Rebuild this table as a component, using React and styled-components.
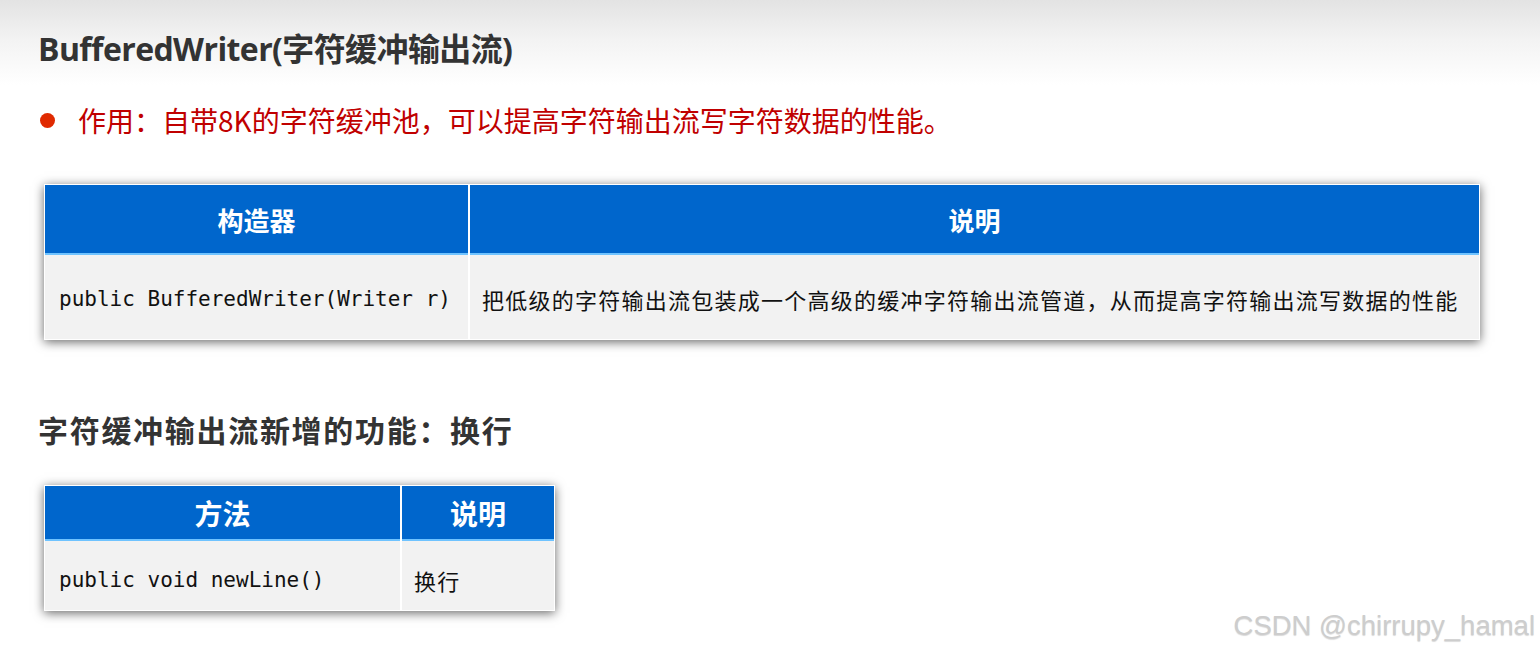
import React from "react";
import styled, { createGlobalStyle } from "styled-components";

const GlobalStyle = createGlobalStyle`
  html, body {
    margin: 0;
    padding: 0;
  }
  body {
    background: #ffffff;
    font-family: "Noto Sans", "Noto Sans CJK SC", sans-serif;
  }
`;

const ctorTable = {
  columns: "423px 1fr",
  width: 1436,
  headHeight: 68,
  rowHeight: 84,
  rowShift: 3,
  headFont: 26,
  head: ["构造器", "说明"],
  rows: [["public BufferedWriter(Writer r)", "把低级的字符输出流包装成一个高级的缓冲字符输出流管道，从而提高字符输出流写数据的性能"]],
};

const methodTable = {
  columns: "355px 1fr",
  width: 511,
  headHeight: 53,
  rowHeight: 69,
  rowShift: 9,
  headFont: 28,
  head: ["方法", "说明"],
  rows: [["public void newLine()", "换行"]],
};

function DataTable({ spec }) {
  return (
    <Table $columns={spec.columns} $width={spec.width}>
      {spec.head.map((h) => (
        <HeadCell key={h} $height={spec.headHeight} $size={spec.headFont}>
          {h}
        </HeadCell>
      ))}
      {spec.rows.map((row) => (
        <React.Fragment key={row[0]}>
          <CodeCell $height={spec.rowHeight} $shift={spec.rowShift}>{row[0]}</CodeCell>
          <TextCell $height={spec.rowHeight} $shift={spec.rowShift}>{row[1]}</TextCell>
        </React.Fragment>
      ))}
    </Table>
  );
}

function App() {
  return (
    <Page>
      <GlobalStyle />
      <Title>BufferedWriter(字符缓冲输出流)</Title>
      <Bullet>
        <Dot />
        <span>作用：自带8K的字符缓冲池，可以提高字符输出流写字符数据的性能。</span>
      </Bullet>
      <DataTable spec={ctorTable} />
      <SubTitle>字符缓冲输出流新增的功能：换行</SubTitle>
      <DataTable spec={methodTable} />
      <Watermark>CSDN @chirrupy_hamal</Watermark>
    </Page>
  );
}

export default App;

const Page = styled.div`
  position: relative;
  width: 1540px;
  height: 652px;
  box-sizing: border-box;
  padding: 28px 0 0 38px;
  overflow: hidden;
  background: linear-gradient(to bottom, #e3e3e3 0px, #f3f3f3 40px, #ffffff 85px, #ffffff 100%);
`;

const Title = styled.h1`
  margin: 0;
  font-family: "Open Sans", "Noto Sans CJK SC", sans-serif;
  font-size: 32px;
  font-weight: 700;
  line-height: 42px;
  color: #333333;
  letter-spacing: -0.6px;
`;

const Bullet = styled.div`
  display: flex;
  align-items: center;
  gap: 23px;
  margin-top: 30px;
  margin-left: 2px;
  font-family: "Noto Sans CJK SC", sans-serif;
  font-size: 28px;
  line-height: 40px;
  color: #c00000;
`;

const Dot = styled.span`
  width: 15px;
  height: 15px;
  border-radius: 50%;
  background: #e02a00;
  flex: none;
`;

const Table = styled.div`
  display: grid;
  grid-template-columns: ${(p) => p.$columns};
  width: ${(p) => p.$width}px;
  margin-left: 6px;
  margin-top: 44px;
  gap: 2px;
  padding: 1px;
  box-sizing: border-box;
  background: #ffffff;
  box-shadow: 0 2px 10px rgba(0, 0, 0, 0.6);
`;

const HeadCell = styled.div`
  display: flex;
  align-items: center;
  justify-content: center;
  height: ${(p) => p.$height}px;
  background: #0066cc;
  border-bottom: 2px solid #6fc3ff;
  margin-bottom: -2px;
  color: #ffffff;
  font-family: "Noto Sans CJK SC", sans-serif;
  font-size: ${(p) => p.$size}px;
  font-weight: 700;
`;

const CodeCell = styled.div`
  display: flex;
  align-items: center;
  height: ${(p) => p.$height}px;
  box-sizing: border-box;
  padding: ${(p) => p.$shift}px 0 0 14px;
  background: #f2f2f2;
  font-family: "DejaVu Sans Mono", "Liberation Mono", monospace;
  font-size: 21px;
  color: #111111;
  white-space: nowrap;
`;

const TextCell = styled.div`
  display: flex;
  align-items: center;
  height: ${(p) => p.$height}px;
  box-sizing: border-box;
  padding: ${(p) => p.$shift}px 0 0 12px;
  background: #f2f2f2;
  font-family: "Noto Sans CJK SC", sans-serif;
  font-size: 22px;
  letter-spacing: 1.25px;
  color: #111111;
  white-space: nowrap;
`;

const SubTitle = styled.h2`
  margin: 69px 0 0 0;
  font-family: "Noto Sans CJK SC", sans-serif;
  font-size: 30px;
  font-weight: 700;
  line-height: 40px;
  letter-spacing: 1.7px;
  color: #333333;
  & + div {
    margin-top: 36px;
  }
`;

const Watermark = styled.div`
  position: absolute;
  right: 5px;
  bottom: 10px;
  font-family: "Liberation Sans", Arial, sans-serif;
  font-size: 27.5px;
  color: #cdcdcd;
  text-shadow: 0 1px 1px rgba(0, 0, 0, 0.15);
`;
